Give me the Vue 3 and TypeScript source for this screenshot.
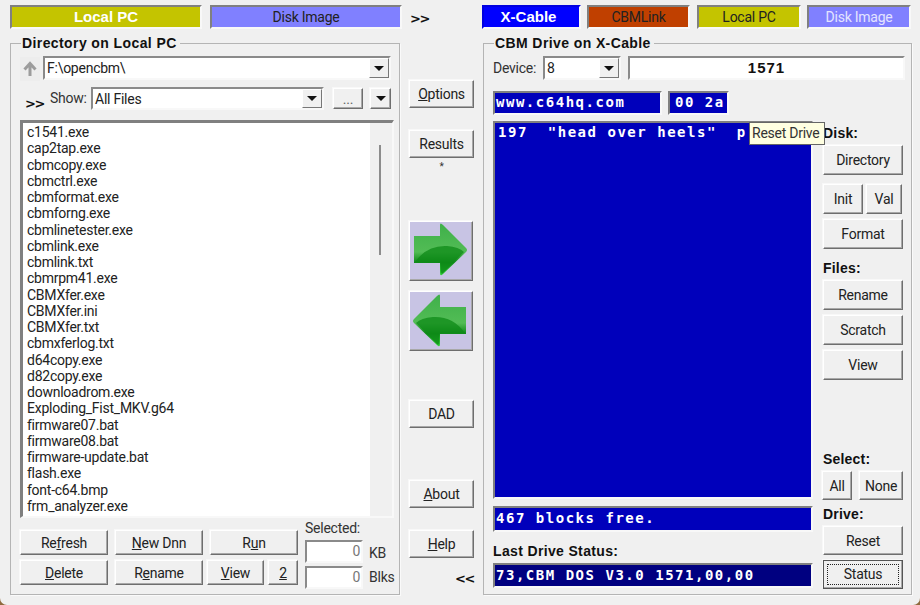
<script setup lang="ts">
const files: string[] = [
  'c1541.exe','cap2tap.exe','cbmcopy.exe','cbmctrl.exe','cbmformat.exe','cbmforng.exe','cbmlinetester.exe','cbmlink.exe','cbmlink.txt','cbmrpm41.exe','CBMXfer.exe','CBMXfer.ini','CBMXfer.txt','cbmxferlog.txt','d64copy.exe','d82copy.exe','downloadrom.exe','Exploding_Fist_MKV.g64','firmware07.bat','firmware08.bat','firmware-update.bat','flash.exe','font-c64.bmp','frm_analyzer.exe'
]
const listing = '197  "head over heels"  p'
</script>

<template>
  <div class="win">
    <div class="tabs">
      <div class="tab active olive w192">Local PC</div>
      <div class="tab periwinkle w192 ml8">Disk Image</div>
      <div class="chev tabchev">&gt;&gt;</div>
      <div class="tab blue w99 active">X-Cable</div>
      <div class="tab rust w103 ml6">CBMLink</div>
      <div class="tab olive w104 ml7">Local PC</div>
      <div class="tab periwinkle light w104 ml6">Disk Image</div>
    </div>

    <div class="main">
      <section class="group left">
        <div class="legend">Directory on Local PC</div>
        <div class="row r1">
          <div class="up">
            <svg width="18" height="20" viewBox="0 0 18 20"><path d="M9 17 V5 M3.5 10.5 L9 4.5 L14.5 10.5" fill="none" stroke="#9c9c9c" stroke-width="3"/></svg>
          </div>
          <div class="field combo path">
            <span>F:\opencbm\</span>
            <i class="drop"><b></b></i>
          </div>
        </div>
        <div class="row r2">
          <div class="chev showchev">&gt;&gt;</div>
          <span class="show">Show:</span>
          <div class="field combo filter">
            <span>All Files</span>
            <i class="drop"><b></b></i>
          </div>
          <button class="btn dots">...</button>
          <button class="btn mini"><b></b></button>
        </div>
        <div class="field list">
          <div class="items">
            <div v-for="f in files" :key="f" class="item">{{ f }}</div>
          </div>
          <div class="track"><div class="thumb"></div></div>
        </div>
        <div class="bottom">
          <div class="bcols">
            <div class="brow top1">
              <button class="btn b88">Re<u>f</u>resh</button>
              <button class="btn b88"><u>N</u>ew Dnn</button>
              <button class="btn b88">R<u>u</u>n</button>
            </div>
            <div class="brow">
              <button class="btn b88"><u>D</u>elete</button>
              <button class="btn b88">R<u>e</u>name</button>
              <button class="btn bview"><u>V</u>iew</button>
              <button class="btn btwo"><u>2</u></button>
            </div>
          </div>
          <div class="sel">
            <div class="sellabel">Selected:</div>
            <div class="selrow"><div class="field num">0</div><span class="kb">KB</span></div>
            <div class="selrow"><div class="field num">0</div><span>Blks</span></div>
          </div>
        </div>
      </section>

      <div class="center">
        <button class="btn cb options"><u>O</u>ptions</button>
        <button class="btn cb results">Results</button>
        <div class="star">*</div>
        <button class="btn arrow a1">
          <svg width="62" height="58" viewBox="1 1 62 58">
            <defs>
              <linearGradient id="ag" x1="0" y1="0" x2="0" y2="1">
                <stop offset="0" stop-color="#3fb04a"/>
                <stop offset="0.55" stop-color="#52bc55"/>
                <stop offset="0.75" stop-color="#0f8a1a"/>
                <stop offset="1" stop-color="#33d33a"/>
              </linearGradient>
            </defs>
            <path d="M5 15 H31 V4 Q31 1 34 4 L57 27 Q59 29 57 31 L34 53 Q31 56 31 52 V42 H5 Z" fill="url(#ag)"/>
            <path d="M6 41 Q18 24 38 25 Q50 26 55 31 L34 52 Q32 54 32 50 V41 Z" fill="#0d8a17" opacity="0.75"/>
          </svg>
        </button>
        <button class="btn arrow a2">
          <svg width="62" height="58" viewBox="1 1 62 58">
            <g transform="translate(62 1) scale(-1 1)">
              <path d="M5 15 H31 V4 Q31 1 34 4 L57 27 Q59 29 57 31 L34 53 Q31 56 31 52 V42 H5 Z" fill="url(#ag)"/>
              <path d="M6 41 Q18 24 38 25 Q50 26 55 31 L34 52 Q32 54 32 50 V41 Z" fill="#0d8a17" opacity="0.75"/>
            </g>
          </svg>
        </button>
        <button class="btn cb dad">DAD</button>
        <button class="btn cb about"><u>A</u>bout</button>
        <button class="btn cb help"><u>H</u>elp</button>
        <div class="chev back">&lt;&lt;</div>
      </div>

      <section class="group right">
        <div class="legend">CBM Drive on X-Cable</div>
        <div class="row dev">
          <span class="devlabel">Device:</span>
          <div class="field combo devcombo">
            <span>8</span>
            <i class="drop"><b></b></i>
          </div>
          <div class="field model">1571</div>
        </div>
        <div class="row cbmtop">
          <div class="field cbm url">www.c64hq.com</div>
          <div class="field cbm code">00 2a</div>
        </div>
        <div class="split">
          <div class="screen">
            <div class="field cbm listing" v-text="listing"></div>
            <div class="field cbm free">467 blocks free.</div>
            <div class="statuslabel">Last Drive Status:</div>
            <div class="field cbm dark">73,CBM DOS V3.0 1571,00,00</div>
          </div>
          <div class="side">
            <div class="slabel s-disk">Disk:</div>
            <button class="btn sb dir">Directory</button>
            <div class="pair p1">
              <button class="btn init">Init</button>
              <button class="btn val">Val</button>
            </div>
            <button class="btn sb fmt">Format</button>
            <div class="slabel s-files">Files:</div>
            <button class="btn sb ren">Rename</button>
            <button class="btn sb gap6">Scratch</button>
            <button class="btn sb gap6">View</button>
            <div class="slabel s-select">Select:</div>
            <div class="pair p2">
              <button class="btn all">All</button>
              <button class="btn none">None</button>
            </div>
            <div class="slabel s-drive">Drive:</div>
            <button class="btn sb rst">Reset</button>
            <button class="btn sb gap6 focus"><span>Status</span></button>
          </div>
        </div>
      </section>
    </div>

    <div class="tooltip">Reset Drive</div>
  </div>
</template>

<style>
html, body { margin: 0; background: #8f6a3e; }
</style>

<style scoped>
.win {
  position: relative;
  box-sizing: border-box;
  width: 920px;
  height: 605px;
  padding: 5px 0 0 10px;
  background: #f0f0f0;
  border-radius: 0 0 7px 7px;
  overflow: hidden;
  font: 14px Roboto, "Liberation Sans", Arial, sans-serif;
  letter-spacing: -0.25px;
  color: #222;
}
.tabs { display: flex; align-items: flex-start; height: 24px; }
.tab {
  box-sizing: border-box;
  height: 24px;
  line-height: 20px;
  text-align: center;
  border: 2px solid;
  border-color: #808080 #f8f8f8 #f8f8f8 #808080;
}
.active { font: 700 15px/20px "Liberation Sans", Arial, sans-serif; letter-spacing: 0; color: #fff; }
.olive { background: #c4c400; }
.periwinkle { background: #8080ff; }
.light { color: #e4e4ff; }
.blue { background: #0000ff; border-color: #0000e0 #f8f8f8 #f8f8f8 #0000e0; padding-right: 6px; }
.rust { background: #c04000; }
.w192 { width: 192px; }
.w99 { width: 99px; }
.w103 { width: 103px; }
.w104 { width: 104px; }
.ml8 { margin-left: 8px; }
.ml7 { margin-left: 7px; }
.ml6 { margin-left: 6px; }
.chev {
  font: 700 13px "DejaVu Sans", sans-serif;
  letter-spacing: -1.5px;
  color: #111;
}
.tabchev { width: 80px; padding-left: 8px; margin-top: 6px; box-sizing: border-box; }

.main { display: flex; margin-top: 14px; gap: 9px; }
.group {
  box-sizing: border-box;
  height: 552px;
  border: 1px solid #b4b4b4;
  box-shadow: 1px 1px 0 #fafafa;
}
.left { width: 390px; padding-left: 9px; }
.right { width: 429px; padding-left: 9px; }
.legend {
  width: fit-content;
  height: 16px;
  margin: -9px 0 5px 1px;
  padding: 0 3px 0 1px;
  background: #f0f0f0;
  font: 700 14px/16px "Liberation Sans", Arial, sans-serif;
  color: #111;
  letter-spacing: 0.4px;
}
.row { display: flex; align-items: flex-start; }
.field {
  box-sizing: border-box;
  border: 2px solid;
  border-color: #8a8a8a #f8f8f8 #f8f8f8 #8a8a8a;
  background: #fff;
}
.combo {
  display: flex;
  align-items: center;
  justify-content: space-between;
  padding: 0 0 0 2px;
  line-height: 20px;
}
.drop {
  box-sizing: border-box;
  display: flex;
  align-items: center;
  justify-content: center;
  width: 20px;
  height: 100%;
  background: #f0f0f0;
  border-top: 1px solid #fff;
  border-left: 1px solid #fff;
  border-right: 1px solid #777;
  border-bottom: 1px solid #777;
}
.drop b, .mini b {
  width: 0;
  height: 0;
  border: 5px solid transparent;
  border-top: 5px solid #111;
  border-bottom: 0;
}
.r1 { height: 24px; }
.up {
  width: 20px;
  height: 24px;
  margin: 1px 3px 0 0;
  display: flex;
  align-items: center;
  justify-content: center;
  background: #ededed;
}
.path { width: 348px; height: 24px; }
.r2 { height: 24px; margin-top: 7px; }
.showchev { width: 25px; margin: 9px 0 0 5px; }
.show { width: 41px; line-height: 22px; color: #333; }
.filter { width: 233px; height: 23px; }
.btn {
  box-sizing: border-box;
  padding: 0;
  margin: 0;
  display: block;
  background: #f0f0f0;
  border: 1px solid;
  border-color: #fff #6e6e6e #6e6e6e #fff;
  box-shadow: inset -1px -1px 0 #a8a8a8, -1px -1px 0 #f8f8f8;
  font: 14px Roboto, "Liberation Sans", Arial, sans-serif;
  letter-spacing: -0.25px;
  color: #222;
  text-align: center;
}
.dots { width: 30px; height: 21px; margin: 1px 0 0 9px; line-height: 16px; color: #666; }
.mini { width: 21px; height: 21px; margin: 1px 0 0 7px; display: flex; align-items: center; justify-content: center; }
.list {
  display: flex;
  width: 374px;
  height: 398px;
  margin-top: 9px;
  border-color: #808080 #f8f8f8 #f8f8f8 #808080;
  border-width: 3px 2px 2px 3px;
}
.items { width: 347px; height: 100%; background: #fff; padding: 1px 0 0 4px; box-sizing: border-box; overflow: hidden; }
.item { height: 16.26px; line-height: 16.26px; color: #222; white-space: nowrap; }
.track { flex: 1; background: #f0f0f0; position: relative; }
.thumb { width: 2px; height: 110px; background: #8c8c8c; margin: 22px 0 0 9px; }

.bottom { display: flex; margin-top: 6px; }
.bcols { width: 278px; padding-top: 6px; }
.brow { display: flex; gap: 7px; margin-bottom: 5px; }
.brow .btn { height: 25px; }
.b88 { width: 88px; }
.bview { width: 57px; margin-left: -3px; }
.btwo { width: 30px; margin-left: -3px; }
.sel { margin-left: 7px; }
.sellabel { line-height: 16px; height: 18px; margin-top: -4px; color: #333; }
.selrow { display: flex; align-items: center; gap: 6px; height: 26px; color: #333; }
.kb { margin-top: 3px; }
.num { width: 58px; height: 23px; line-height: 19px; text-align: right; padding-right: 1px; color: #777; }

.center { width: 65px; height: 552px; display: flex; flex-direction: column; }
.cb { width: 65px; height: 28px; }
.options { margin-top: 37px; }
.results { margin-top: 22px; }
.star { height: 12px; line-height: 14px; text-align: center; font-size: 10px; margin-top: 2px; color: #333; }
.arrow {
  width: 64px;
  height: 60px;
  background: #c8c4e4;
  display: flex;
  align-items: center;
  justify-content: center;
}
.a1 { margin-top: 49px; }
.a2 { margin-top: 10px; }
.dad { margin-top: 49px; }
.about { margin-top: 52px; }
.help { margin-top: 22px; }
.back { margin: 13px 0 0 46px; }

.dev { height: 24px; }
.devlabel { width: 50px; line-height: 24px; color: #333; }
.devcombo { width: 78px; height: 24px; }
.model { width: 277px; height: 24px; margin-left: 7px; text-align: center; font: 700 15px/20px "Liberation Sans", Arial, sans-serif; color: #111; letter-spacing: 1px; }
.cbmtop { margin-top: 11px; gap: 6px; }
.cbm {
  background: #0000bb;
  color: #fff;
  font: 700 14px "DejaVu Sans Mono", monospace;
  letter-spacing: 1.52px;
  white-space: pre;
  border-color: #808080 #f8f8f8 #f8f8f8 #808080;
  padding-left: 1px;
}
.url { width: 169px; height: 24px; line-height: 19px; }
.code { width: 61px; height: 24px; line-height: 19px; padding-left: 5px; }
.split { display: flex; margin-top: 6px; }
.screen { width: 320px; }
.listing { height: 378px; width: 320px; line-height: 19px; padding-left: 3px; }
.free { height: 26px; margin-top: 7px; line-height: 20px; }
.statuslabel { height: 16px; margin-top: 11px; font: 700 14px/16px "Liberation Sans", Arial, sans-serif; color: #111; letter-spacing: 0.35px; }
.dark { background: #000080; height: 25px; margin-top: 4px; line-height: 20px; }
.side { margin-left: 10px; width: 82px; display: flex; flex-direction: column; }
.slabel { height: 16px; font: 700 14px/16px "Liberation Sans", Arial, sans-serif; color: #111; letter-spacing: 0.2px; }
.sb { width: 80px; height: 30px; }
.s-disk { margin-top: 4px; }
.dir { margin-top: 4px; }
.pair { display: flex; }
.p1 { margin-top: 9px; gap: 3px; }
.init { width: 40px; height: 30px; }
.val { width: 36px; height: 30px; }
.fmt { margin-top: 5px; }
.s-files { margin-top: 11px; }
.ren { margin-top: 4px; }
.gap6 { margin-top: 5px; }
.s-select { margin-top: 71px; }
.p2 { margin-top: 4px; margin-left: -1px; gap: 7px; }
.all { width: 30px; height: 29px; }
.none { width: 44px; height: 29px; }
.s-drive { margin-top: 6px; }
.rst { margin-top: 4px; height: 29px; }
.focus { height: 29px; border-color: #555; padding: 3px; }
.focus span { display: block; height: 100%; line-height: 19px; box-sizing: border-box; border: 1px dotted #222; }
.tooltip {
  position: absolute;
  left: 749px;
  top: 122px;
  box-sizing: border-box;
  width: 76px;
  height: 23px;
  line-height: 21px;
  padding-left: 2px;
  background: #ffffe1;
  border: 1px solid #666;
  color: #333;
  white-space: nowrap;
}
</style>
